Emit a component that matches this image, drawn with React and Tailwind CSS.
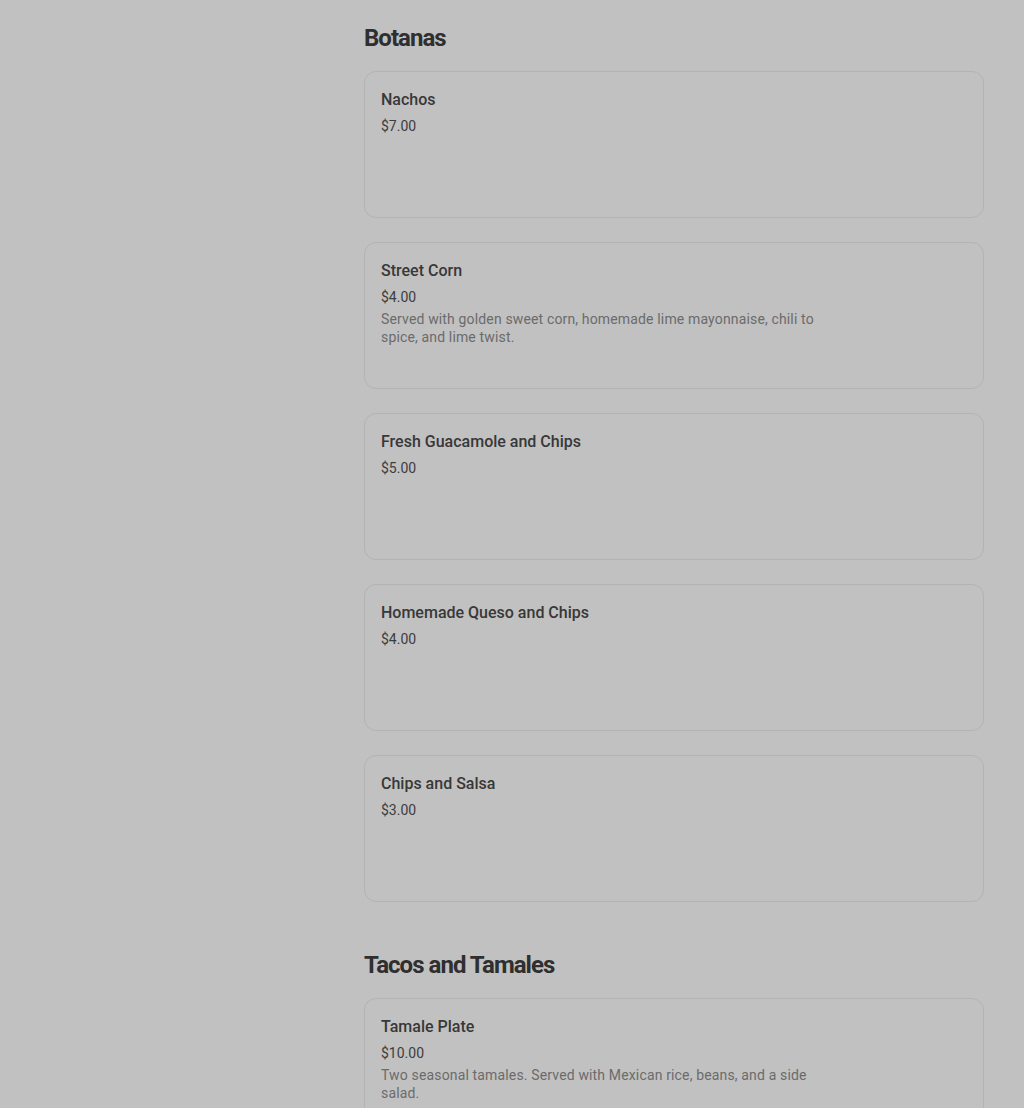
import React from "react";

const sections = [
  {
    title: "Botanas",
    items: [
      { name: "Nachos", price: "$7.00" },
      {
        name: "Street Corn",
        price: "$4.00",
        desc: "Served with golden sweet corn, homemade lime mayonnaise, chili to spice, and lime twist.",
      },
      { name: "Fresh Guacamole and Chips", price: "$5.00" },
      { name: "Homemade Queso and Chips", price: "$4.00" },
      { name: "Chips and Salsa", price: "$3.00" },
    ],
  },
  {
    title: "Tacos and Tamales",
    items: [
      {
        name: "Tamale Plate",
        price: "$10.00",
        desc: "Two seasonal tamales. Served with Mexican rice, beans, and a side salad.",
      },
    ],
  },
];

function Card({ item }) {
  return (
    <div className="h-[147px] rounded-xl border border-[#b3b3b3] px-4 pt-4">
      <div className="text-[16px] leading-6 font-medium text-[#383838]">{item.name}</div>
      <div className="mt-[4px] text-[14px] leading-5 text-[#3d3d3d]">{item.price}</div>
      {item.desc && (
        <div className="mt-[3px] max-w-[445px] text-[14px] leading-[18px] tracking-[0.15px] text-[#6b6b6b]">
          {item.desc}
        </div>
      )}
    </div>
  );
}

export default function App() {
  return (
    <div
      className="min-h-[1108px] bg-[#c1c1c1] flex"
      style={{ fontFamily: "Roboto, 'Liberation Sans', sans-serif" }}
    >
      <aside className="w-[364px] shrink-0" />
      <main className="flex-1 pr-10 pt-[22px] flex flex-col gap-[47px]">
        {sections.map((s) => (
          <section key={s.title}>
            <h2 className="text-[24px] leading-8 font-bold tracking-[-0.04em] text-[#2f2f2f] mb-[17px]">
              {s.title}
            </h2>
            <div className="flex flex-col gap-6">
              {s.items.map((it) => (
                <Card key={it.name} item={it} />
              ))}
            </div>
          </section>
        ))}
      </main>
    </div>
  );
}
